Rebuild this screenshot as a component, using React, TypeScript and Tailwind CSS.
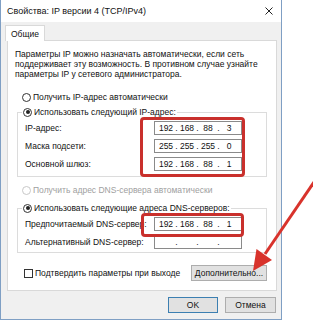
import type { ReactNode } from 'react'

function Radio({ checked = false, disabled = false, children }: { checked?: boolean; disabled?: boolean; children: ReactNode }) {
  return (
    <div className={`flex items-center h-[10px] ${disabled ? 'text-[#a0a0a0]' : 'text-[#111]'}`}>
      <span
        className={`w-[9px] h-[9px] rounded-full border bg-white flex items-center justify-center ${disabled ? 'border-[#c8c8c8]' : 'border-[#333]'}`}
      >
        {checked && <span className="w-[4px] h-[4px] rounded-full bg-[#222]" />}
      </span>
      <span className="ml-[2px] whitespace-nowrap">{children}</span>
    </div>
  )
}

function IpField({ parts }: { parts: string[] }) {
  return (
    <div className="h-[14px] w-[88px] border border-[#8a8a8a] bg-white flex items-center pl-[3px] text-[#111]">
      {parts.map((p, i) => (
        <div key={i} className="flex">
          {i > 0 && <span className="w-[5px] text-center">.</span>}
          <span className="w-[16px] text-center">{p}</span>
        </div>
      ))}
    </div>
  )
}

function Row({ label, parts }: { label: string; parts: string[] }) {
  return (
    <div className="grid grid-cols-[129px_88px] items-center h-[14px]">
      <span className="whitespace-nowrap">{label}</span>
      <IpField parts={parts} />
    </div>
  )
}

export default function App() {
  return (
    <div className="relative w-[313px] h-[320px] bg-white flex font-['Liberation_Sans',Arial,sans-serif] text-[8.5px] leading-[10px] overflow-hidden">
      {/* окно */}
      <div className="w-[282px] h-[320px] border-l border-r border-b border-[#7f9fc4] bg-[#f0f0f0] flex flex-col">
        <div className="h-[22px] bg-white flex items-center justify-between pl-[6px] pr-[8px]">
          <span className="text-[9px] text-[#111]">Свойства: IP версии 4 (TCP/IPv4)</span>
          <svg width="8" height="8" viewBox="0 0 8 8" stroke="#222" strokeWidth="1">
            <path d="M0.5 0.5 L7.5 7.5 M7.5 0.5 L0.5 7.5" />
          </svg>
        </div>

        <div className="ml-[4px] mt-[3px] relative z-10 -mb-px">
          <div className="inline-flex h-[16px] items-center px-[5px] bg-white border border-b-0 border-[#d9d9d9] text-[#111]">
            Общие
          </div>
        </div>

        <div className="ml-[6px] w-[270px] h-[251px] bg-white border border-[#d9d9d9] flex flex-col">
          <p className="pt-[8px] pl-[7px] text-[#111]">
            Параметры IP можно назначать автоматически, если сеть
            <br />
            поддерживает эту возможность. В противном случае узнайте
            <br />
            параметры IP у сетевого администратора.
          </p>

          <div className="mt-[13px] pl-[14px]">
            <Radio>Получить IP-адрес автоматически</Radio>
          </div>

          <fieldset className="ml-[9px] mt-[5px] w-[250px] border border-[#dcdcdc] pb-[5px]">
            <legend className="ml-[4px] px-[1px]">
              <Radio checked>Использовать следующий IP-адрес:</Radio>
            </legend>
            <div className="pl-[7px] mt-[4px] flex flex-col gap-[4px] text-[#111]">
              <Row label="IP-адрес:" parts={['192', '168', '88', '3']} />
              <Row label="Маска подсети:" parts={['255', '255', '255', '0']} />
              <Row label="Основной шлюз:" parts={['192', '168', '88', '1']} />
            </div>
          </fieldset>

          <div className="mt-[8px] pl-[14px]">
            <Radio disabled>Получить адрес DNS-сервера автоматически</Radio>
          </div>

          <fieldset className="ml-[9px] mt-[8px] w-[250px] border border-[#dcdcdc] pb-[3px]">
            <legend className="ml-[4px] px-[1px]">
              <Radio checked>Использовать следующие адреса DNS-серверов:</Radio>
            </legend>
            <div className="pl-[7px] mt-[4px] flex flex-col gap-[4px] text-[#111]">
              <Row label="Предпочитаемый DNS-сервер:" parts={['192', '168', '88', '1']} />
              <Row label="Альтернативный DNS-сервер:" parts={['', '', '', '']} />
            </div>
          </fieldset>

          <div className="mt-[12px] pl-[16px] pr-[9px] flex items-center justify-between">
            <div className="flex items-center text-[#111]">
              <span className="w-[9px] h-[9px] border border-[#333] bg-white" />
              <span className="ml-[2px]">Подтвердить параметры при выходе</span>
            </div>
            <button className="h-[16px] w-[76px] bg-[#e1e1e1] border border-[#adadad] text-[#111]">
              Дополнительно...
            </button>
          </div>
        </div>

        <div className="mt-[6px] mr-[5px] flex justify-end gap-[7px]">
          <button className="h-[16px] w-[50px] bg-[#e1e1e1] border border-[#3c7fb1] text-[#111]">OK</button>
          <button className="h-[16px] w-[51px] bg-[#e1e1e1] border border-[#adadad] text-[#111]">Отмена</button>
        </div>
      </div>

      {/* пометки */}
      <div className="absolute left-[140px] top-[117px] w-[105px] h-[60px] border-[3px] border-[#c9302c] rounded-[4px]" />
      <div className="absolute left-[141px] top-[213px] w-[103px] h-[24px] border-[3px] border-[#c9302c] rounded-[4px]" />
      <svg className="absolute left-0 top-0" width="313" height="320" viewBox="0 0 313 320">
        <line x1="314" y1="182" x2="265" y2="254" stroke="#d8332c" strokeWidth="3" />
        <polygon points="253,271 256.5,249 272,260" fill="#d8332c" />
      </svg>
    </div>
  )
}
